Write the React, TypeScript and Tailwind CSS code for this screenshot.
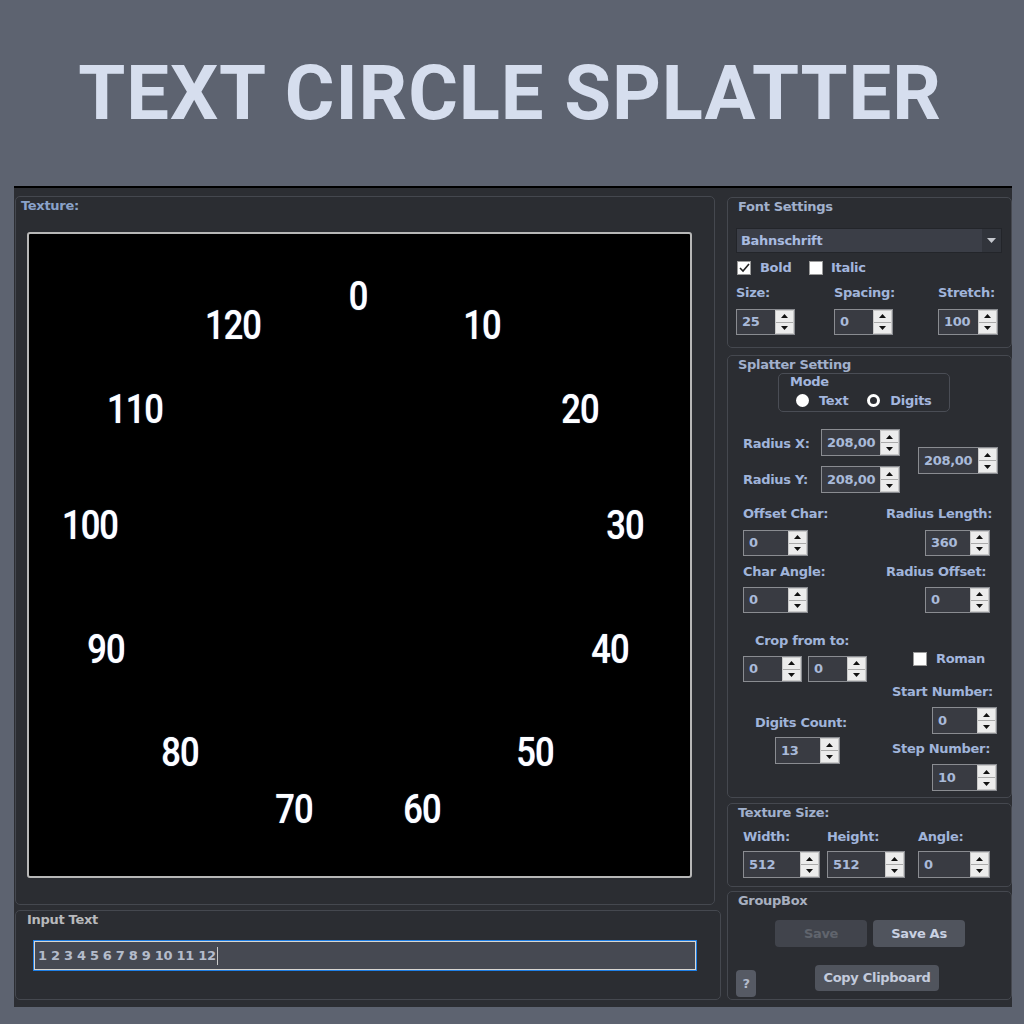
import React from "react";

const nums = [
    { t: "0", c: "left-[329px] top-[63px]" },
    { t: "10", c: "left-[453px] top-[92px]" },
    { t: "20", c: "left-[551px] top-[176px]" },
    { t: "30", c: "left-[596px] top-[292px]" },
    { t: "40", c: "left-[581px] top-[416px]" },
    { t: "50", c: "left-[506px] top-[519px]" },
    { t: "60", c: "left-[393px] top-[576px]" },
    { t: "70", c: "left-[265px] top-[576px]" },
    { t: "80", c: "left-[151px] top-[519px]" },
    { t: "90", c: "left-[77px] top-[416px]" },
    { t: "100", c: "left-[61px] top-[292px]" },
    { t: "110", c: "left-[106px] top-[176px]" },
    { t: "120", c: "left-[204px] top-[92px]" },
];

const Arrow = ({ up }: { up?: boolean }) => (
    <svg width="7" height="4" viewBox="0 0 7 4">
        <path d={up ? "M0 4 L3.5 0 L7 4 Z" : "M0 0 L7 0 L3.5 4 Z"} fill="#111" />
    </svg>
);

const Spin: React.FC<{ v: string; w: string; h?: string }> = ({ v, w, h = "h-[27px]" }) => (
    <div className={`flex border border-[#8a8c91] bg-[#393b42] ${w} ${h}`}>
        <div className="flex flex-1 items-center pl-[5px] text-[13px] text-[#a9bad9]">{v}</div>
        <div className="flex w-[19px] flex-col border border-[#c9c9c9] bg-[#ececec]">
            <div className="flex flex-1 items-center justify-center border-b border-[#a9a9a9]">
                <Arrow up />
            </div>
            <div className="flex flex-1 items-center justify-center">
                <Arrow />
            </div>
        </div>
    </div>
);

const Check: React.FC<{ on?: boolean }> = ({ on }) => (
    <div className="flex h-[14px] w-[14px] items-center justify-center border border-[#9a9a9a] bg-white">
        {on && (
            <svg width="11" height="10" viewBox="0 0 11 10">
                <path d="M1 5 L4 8 L10 1" stroke="#222" strokeWidth="1.6" fill="none" />
            </svg>
        )}
    </div>
);

const Group: React.FC<{
    title: string;
    tc?: string;
    tp?: string;
    className: string;
    children?: React.ReactNode;
}> = ({ title, tc = "text-[#a1b0cc]", tp = "pl-[10px]", className, children }) => (
    <div className={`rounded-[5px] border border-[#45484f] bg-[#2b2d32] ${className}`}>
        <div className={`h-[17px] leading-[17px] ${tp} ${tc}`}>{title}</div>
        <div className="px-[8px]">{children}</div>
    </div>
);

const lbl = "h-[16px] leading-[16px] text-[#a0b4da]";

export default function App() {
    return (
        <div className="flex h-[1024px] w-[1024px] flex-col overflow-hidden bg-[#5d6370] font-['DejaVu_Sans',sans-serif] text-[13px] font-bold tracking-[-0.3px]">
            <div className="flex h-[186px] items-center justify-center pr-[4px]">
                <h1 className="font-['Roboto',sans-serif] text-[76px] leading-none font-bold tracking-[0.9px] text-[#d6deee]">
                    TEXT CIRCLE SPLATTER
                </h1>
            </div>

            <div className="ml-[14px] flex h-[821px] w-[998px] border-t-2 border-black bg-[#2c2e33]">
                {/* left side */}
                <div className="flex w-[709px] flex-col pl-[1px] pt-[8px]">
                    <Group title="Texture:" tc="text-[#8aa2ca]" tp="pl-[5px]" className="h-[709px] w-[700px]">
                        <div className="ml-[3px] mt-[18px] relative h-[646px] w-[665px] overflow-hidden rounded-[3px] border-2 border-[#b7b7b7] bg-black">
                            {nums.map((n) => (
                                <span
                                    key={n.t}
                                    className={`absolute -translate-x-1/2 -translate-y-1/2 scale-x-[0.86] font-['Roboto',sans-serif] text-[40px] font-medium tracking-[-1px] text-white [text-shadow:0_0_1px_#7fb2ff] ${n.c}`}>
                                    {n.t}
                                </span>
                            ))}
                        </div>
                    </Group>

                    <Group title="Input Text" tc="text-[#b8b9bc]" tp="pl-[11px]" className="mt-[5px] h-[90px] w-[706px]">
                        <div className="ml-[9px] mt-[12px] h-[31px] w-[664px] border border-[#1f7fe6] p-0">
                            <div className="flex h-full items-center border border-[#d9d6d0] bg-[#464952] pl-[3px] text-[13px] text-[#b4bccb]">
                                1 2 3 4 5 6 7 8 9 10 11 12
                                <span className="ml-[1px] h-[18px] w-[1px] bg-[#c8c8c8]" />
                            </div>
                        </div>
                    </Group>
                </div>

                {/* right side */}
                <div className="flex flex-1 flex-col pl-[4px] pt-[9px]">
                    <Group title="Font Settings" className="h-[151px] w-[285px]">
                        <div className="mt-[13px] flex h-[25px] w-[266px] items-center border border-[#23252a] bg-[#3b3e47]">
                            <span className="flex-1 pl-[4px] text-[#a8bbe0]">Bahnschrift</span>
                            <div className="flex h-[23px] w-[19px] items-center justify-center bg-[#31343b]">
                                <svg width="9" height="5" viewBox="0 0 9 5">
                                    <path d="M0 0 L9 0 L4.5 5 Z" fill="#c5c8ce" />
                                </svg>
                            </div>
                        </div>
                        <div className="mt-[7px] flex h-[16px] items-center">
                            <div className="flex w-[73px] items-center pl-[1px]">
                                <Check on />
                                <span className="ml-[9px] text-[#a3b6de]">Bold</span>
                            </div>
                            <Check />
                            <span className="ml-[8px] text-[#a3b6de]">Italic</span>
                        </div>
                        <div className="mt-[9px] flex">
                            <div className="w-[98px]">
                                <div className={lbl}>Size:</div>
                                <div className="mt-[8px]">
                                    <Spin v="25" w="w-[59px]" h="h-[26px]" />
                                </div>
                            </div>
                            <div className="w-[104px]">
                                <div className={lbl}>Spacing:</div>
                                <div className="mt-[8px]">
                                    <Spin v="0" w="w-[59px]" h="h-[26px]" />
                                </div>
                            </div>
                            <div>
                                <div className={lbl}>Stretch:</div>
                                <div className="mt-[8px]">
                                    <Spin v="100" w="w-[60px]" h="h-[26px]" />
                                </div>
                            </div>
                        </div>
                    </Group>

                    <Group title="Splatter Setting" className="mt-[7px] h-[443px] w-[285px]">
                        <div className="ml-[42px] h-[39px] w-[172px] rounded-[5px] border border-[#4a4d55] pl-[11px]">
                            <div className="h-[16px] leading-[16px] text-[#a3b6de]">Mode</div>
                            <div className="mt-[1px] flex items-center pl-[6px] text-[#a3b6de]">
                                <span className="h-[13px] w-[13px] rounded-full bg-white" />
                                <span className="ml-[10px]">Text</span>
                                <span className="ml-[19px] h-[13px] w-[13px] rounded-full border-[3px] border-white bg-[#2b2d32]" />
                                <span className="ml-[10px]">Digits</span>
                            </div>
                        </div>

                        <div className="ml-[7px] mt-[17px] flex">
                            <div>
                                <div className="flex items-center">
                                    <span className="w-[78px] pt-[3px] text-[#a0b4da]">Radius X:</span>
                                    <Spin v="208,00" w="w-[79px]" />
                                </div>
                                <div className="mt-[10px] flex items-center">
                                    <span className="w-[78px] text-[#a0b4da]">Radius Y:</span>
                                    <Spin v="208,00" w="w-[79px]" />
                                </div>
                            </div>
                            <div className="ml-[18px] mt-[18px]">
                                <Spin v="208,00" w="w-[80px]" />
                            </div>
                        </div>

                        <div className="ml-[7px] mt-[13px] flex">
                            <div className="w-[143px]">
                                <div className={lbl}>Offset Char:</div>
                                <div className="mt-[8px]">
                                    <Spin v="0" w="w-[65px]" h="h-[26px]" />
                                </div>
                                <div className={`${lbl} mt-[8px]`}>Char Angle:</div>
                                <div className="mt-[7px]">
                                    <Spin v="0" w="w-[65px]" h="h-[26px]" />
                                </div>
                            </div>
                            <div>
                                <div className={lbl}>Radius Length:</div>
                                <div className="ml-[39px] mt-[8px]">
                                    <Spin v="360" w="w-[65px]" h="h-[26px]" />
                                </div>
                                <div className={`${lbl} mt-[8px]`}>Radius Offset:</div>
                                <div className="ml-[39px] mt-[7px]">
                                    <Spin v="0" w="w-[65px]" h="h-[26px]" />
                                </div>
                            </div>
                        </div>

                        <div className="ml-[7px] mt-[20px] flex">
                            <div className="w-[149px]">
                                <div className={`${lbl} ml-[12px]`}>Crop from to:</div>
                                <div className="mt-[7px] flex gap-[6px]">
                                    <Spin v="0" w="w-[59px]" h="h-[26px]" />
                                    <Spin v="0" w="w-[59px]" h="h-[26px]" />
                                </div>
                                <div className={`${lbl} ml-[12px] mt-[33px]`}>Digits Count:</div>
                                <div className="ml-[32px] mt-[6px]">
                                    <Spin v="13" w="w-[65px]" />
                                </div>
                            </div>
                            <div>
                                <div className="ml-[21px] mt-[18px] flex h-[16px] items-center">
                                    <Check />
                                    <span className="ml-[9px] text-[#a3b6de]">Roman</span>
                                </div>
                                <div className={`${lbl} mt-[17px]`}>Start Number:</div>
                                <div className="ml-[40px] mt-[7px]">
                                    <Spin v="0" w="w-[65px]" />
                                </div>
                                <div className={`${lbl} mt-[7px]`}>Step Number:</div>
                                <div className="ml-[40px] mt-[7px]">
                                    <Spin v="10" w="w-[65px]" />
                                </div>
                            </div>
                        </div>
                    </Group>

                    <Group title="Texture Size:" className="mt-[5px] h-[84px] w-[285px]">
                        <div className="ml-[7px] mt-[8px] flex">
                            <div className="w-[84px]">
                                <div className={lbl}>Width:</div>
                                <div className="mt-[6px]">
                                    <Spin v="512" w="w-[77px]" />
                                </div>
                            </div>
                            <div className="w-[91px]">
                                <div className={lbl}>Height:</div>
                                <div className="mt-[6px]">
                                    <Spin v="512" w="w-[78px]" />
                                </div>
                            </div>
                            <div>
                                <div className={lbl}>Angle:</div>
                                <div className="mt-[6px]">
                                    <Spin v="0" w="w-[72px]" />
                                </div>
                            </div>
                        </div>
                    </Group>

                    <Group title="GroupBox" tc="text-[#a8b0c0]" className="mt-[4px] h-[109px] w-[285px]">
                        <div className="ml-[39px] mt-[11px] flex gap-[6px]">
                            <button className="h-[27px] w-[92px] rounded-[4px] bg-[#41444c] text-[#60646d]">Save</button>
                            <button className="h-[27px] w-[92px] rounded-[4px] bg-[#50545d] text-[#c9d1e2]">Save As</button>
                        </div>
                        <div className="mt-[18px] flex items-start">
                            <button className="mt-[5px] h-[27px] w-[20px] rounded-[4px] bg-[#565a64] text-[#b3bccc]">?</button>
                            <button className="ml-[59px] h-[26px] w-[124px] rounded-[4px] bg-[#50545d] text-[#c3cbdc]">
                                Copy Clipboard
                            </button>
                        </div>
                    </Group>
                </div>
            </div>
        </div>
    );
}
